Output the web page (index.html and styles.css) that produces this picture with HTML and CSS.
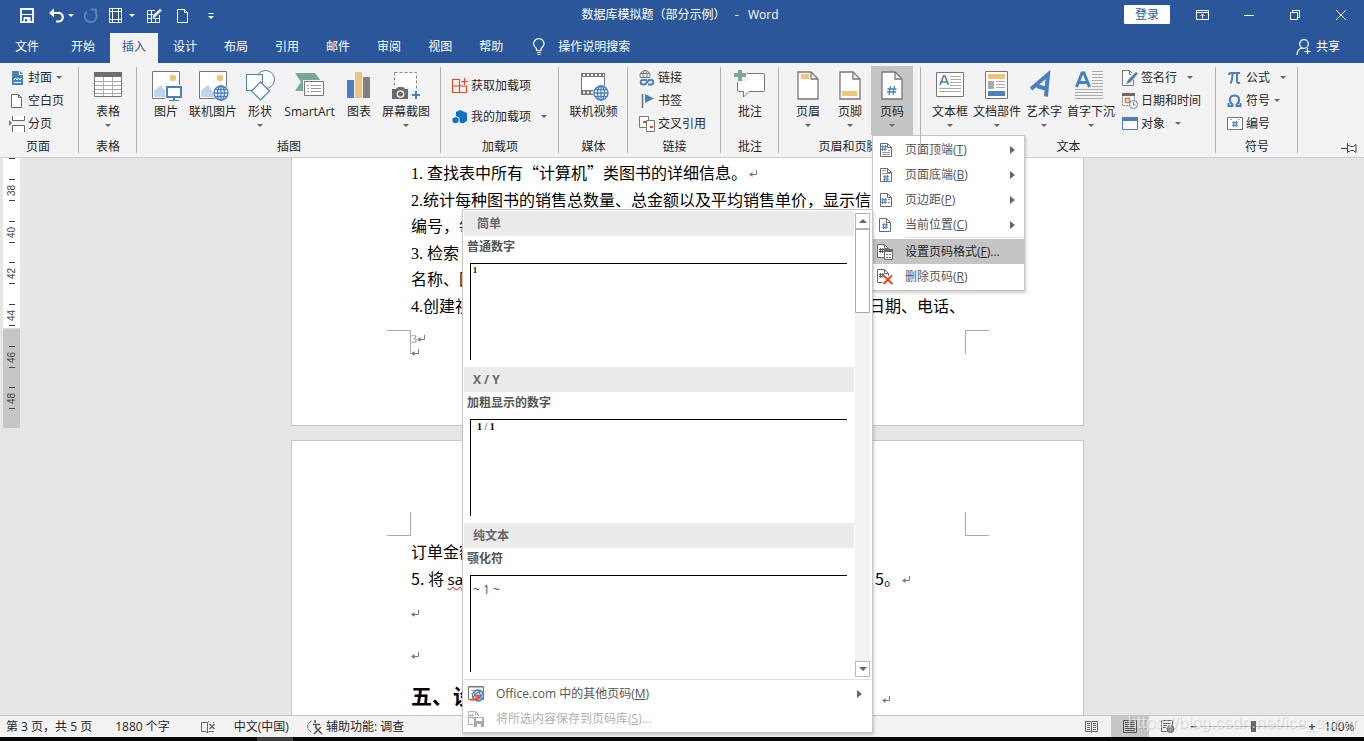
FILE: index.html
```html
<!DOCTYPE html>
<html lang="zh-CN">
<head>
<meta charset="utf-8">
<title>数据库模拟题（部分示例） - Word</title>
<link rel="stylesheet" href="styles.css">
</head>
<body>
<svg class="defs" aria-hidden="true">
  <symbol id="ret" viewBox="0 0 9 8"><path d="M7.500 0v4.500H2" fill="none" stroke="#777"/><path d="M0 4.500l3.500-2.500v5z" fill="#777"/></symbol>
  <symbol id="globe" viewBox="0 0 16 16"><circle cx="8" cy="8" r="8" fill="#f3f3f3"/><g fill="#fff" stroke="#4a80bb" stroke-width="1.300"><circle cx="8" cy="8" r="7"/><ellipse cx="8" cy="8" rx="3.500" ry="7"/><path d="M8 1v14M1 8h14M2 4.500h12M2 11.500h12"/></g></symbol>
  <symbol id="page" viewBox="0 0 22 29"><path d="M1 1h13l7 7v20H1z" fill="#fff" stroke="#777" stroke-width="1.300"/><path d="M14 1v7h7" fill="none" stroke="#777" stroke-width="1.300"/></symbol>
  <symbol id="mini" viewBox="0 0 12 14"><path d="M.5.5h7l4 4v9H.5z" fill="#fff" stroke="#6a6a6a"/><path d="M7.500.5v4h4" fill="none" stroke="#6a6a6a"/></symbol>
  <symbol id="hash" viewBox="0 0 6 6"><path d="M2 0L1.500 6M4.500 0L4 6M0 1.700h6M0 4.200h6" fill="none" stroke="currentColor" stroke-width="1.100"/></symbol>
</svg>

<header class="top">
  <div class="titlebar">
    <div class="quick">
      <button class="qa" aria-label="保存"><svg width="16" height="16" viewBox="0 0 16 16"><path d="M1 1h12v13H1z" fill="none" stroke="#fff" stroke-width="1.800"/><path d="M2 6.500h10M4 9.500h6V14H4z" fill="#fff" stroke="#fff"/><path d="M5 11h2v2.500H5z" fill="#2b579a"/></svg></button>
      <button class="qa undo" aria-label="撤消"><svg width="16" height="16" viewBox="0 0 16 16"><path d="M3 5h7a4 4 0 0 1 1 8.500H8" fill="none" stroke="#fff" stroke-width="2.200"/><path d="M1 5l5-4.500v9z" fill="#fff"/></svg><i class="caret"></i></button>
      <button class="qa redo" aria-label="恢复"><svg width="16" height="16" viewBox="0 0 16 16"><path d="M4 3.500A6 6 0 1 0 12 4M8 1.500h5v5" fill="none" stroke="#6485b8" stroke-width="1.800"/></svg></button>
      <button class="qa" aria-label="页边距"><svg width="16" height="16" viewBox="0 0 16 16"><path d="M.5.5h12v14H.5zM3.500 0v15M9.500 0v15M0 3.500h13M0 11.500h13" fill="none" stroke="#fff"/></svg><i class="caret"></i></button>
      <button class="qa" aria-label="绘制表格"><svg width="16" height="16" viewBox="0 0 16 16"><path d="M8 2.500H.5v12h12V7M0 6.500h7M4.500 2v12M8.500 10v5M0 10.500h13" fill="none" stroke="#fff"/><path d="M5 11l1-4 7-6.500 2 2-7 7z" fill="#fff" stroke="#2b579a" stroke-width=".6"/></svg></button>
      <button class="qa" aria-label="新建"><svg width="16" height="16" viewBox="0 0 16 16"><path d="M2.500 1.500h7l3 3v10h-10zM9.500 1.500v3h3" fill="none" stroke="#fff"/></svg></button>
      <button class="qa" aria-label="自定义"><svg width="16" height="16" viewBox="0 0 16 16"><path d="M5.500 5.500h5" stroke="#fff"/><path d="M5 8h6l-3 3z" fill="#fff"/></svg></button>
    </div>
    <h1 class="title">数据库模拟题（部分示例） &nbsp; - &nbsp;&nbsp;Word</h1>
    <div class="window">
      <button class="login">登录</button>
      <button class="win" aria-label="功能区显示选项"><svg width="14" height="14" viewBox="0 0 14 14"><path d="M.5 2.500h12v9H.5zM0 4.500h13M6.500 10.500v-4M4.500 8l2-2 2 2" fill="none" stroke="#fff"/></svg></button>
      <button class="win" aria-label="最小化"><svg width="12" height="12" viewBox="0 0 12 12"><path d="M1 6.500h10" stroke="#fff"/></svg></button>
      <button class="win" aria-label="还原"><svg width="12" height="12" viewBox="0 0 12 12"><path d="M1.500 3.500h7v7h-7zM3.500 3V1.500h7v7H9" fill="none" stroke="#fff"/></svg></button>
      <button class="win" aria-label="关闭"><svg width="12" height="12" viewBox="0 0 12 12"><path d="M1 1l10 10M11 1L1 11" stroke="#fff"/></svg></button>
    </div>
  </div>
  <nav class="tabs">
    <button class="tab file">文件</button>
    <button class="tab">开始</button>
    <button class="tab active">插入</button>
    <button class="tab">设计</button>
    <button class="tab">布局</button>
    <button class="tab">引用</button>
    <button class="tab">邮件</button>
    <button class="tab">审阅</button>
    <button class="tab">视图</button>
    <button class="tab">帮助</button>
    <button class="tell"><svg width="14" height="18" viewBox="0 0 14 18"><path d="M4.500 12.500v-2C2 8.500 1.500 7 1.500 6a5.300 5.300 0 0 1 10.600 0c0 1-.6 2.500-3 4.500v2zM5 14.500h4M5.500 16.500h3" fill="none" stroke="#fff" stroke-width="1.200"/></svg>操作说明搜索</button>
    <button class="share"><svg width="16" height="16" viewBox="0 0 16 16"><circle cx="8" cy="5" r="4.300" fill="none" stroke="#fff" stroke-width="1.200"/><path d="M1 16c0-4 2.500-6.500 5.500-7M11.500 9v6M8.500 12.500h6" fill="none" stroke="#fff" stroke-width="1.200"/></svg>共享</button>
  </nav>
</header>

<section class="ribbon">
  <div class="group g-pages">
    <div class="body"><div class="stack">
      <button class="small"><svg width="16" height="16" viewBox="0 0 16 16"><path d="M3 1h7v4h4v10H3z" fill="#4a80bb"/><path d="M11 1l3 3h-3z" fill="#4a80bb"/><path d="M5 10l1.500-2L8 10l1.500-2 1.500 2 1.500-2M5 12.500h7" fill="none" stroke="#fff"/></svg>封面<i class="caret"></i></button>
      <button class="small"><svg width="16" height="16" viewBox="0 0 16 16"><path d="M2.500 1.500h7l3 3v10h-10zM9.500 1.500v3h3" fill="#fff" stroke="#6a6a6a"/></svg>空白页</button>
      <button class="small"><svg width="16" height="16" viewBox="0 0 16 16"><path d="M3.500 0v4.500h12V0M3.500 16V9.500h12V16" fill="#fff" stroke="#6a6a6a"/><path d="M0 4l3 3-3 3z" fill="#4a80bb"/></svg>分页</button>
    </div></div>
    <div class="label">页面</div>
  </div>
  <div class="group g-table">
    <div class="body"><button class="big"><svg width="32" height="32" viewBox="0 0 32 32"><path d="M2.500 2.500h27v24h-27z" fill="#fff" stroke="#777"/><path d="M2 2h28v5H2z" fill="#6e6e6e"/><path d="M3 11.500h26M3 15.500h26M3 19.500h26M3 23.500h26M11.500 7v19M20.500 7v19" stroke="#aaa"/></svg>表格<i class="caret"></i></button></div>
    <div class="label">表格</div>
  </div>
  <div class="group g-illus">
    <div class="body">
      <button class="big"><svg width="32" height="32" viewBox="0 0 32 32"><path d="M2.500 1.500h27v27h-27z" fill="#fff" stroke="#777"/><circle cx="23" cy="8" r="3.200" fill="#edc57b"/><path d="M4 27v-6l7-6 9 12z" fill="#bfd3e9"/><path d="M15 15h18v14H15z" fill="#f3f3f3"/><path d="M17 17h14v10H17z" fill="#fff" stroke="#4a80bb" stroke-width="2"/><path d="M23 28h2v2h4v1H19v-1h4z" fill="#4a80bb"/></svg>图片</button>
      <button class="big"><svg width="32" height="32" viewBox="0 0 32 32"><path d="M2.500 1.500h27v27h-27z" fill="#fff" stroke="#777"/><circle cx="23" cy="8" r="3.200" fill="#edc57b"/><path d="M4 27v-6l7-6 9 12z" fill="#bfd3e9"/><use href="#globe" x="16" y="15" width="16" height="16"/></svg>联机图片</button>
      <button class="big"><svg width="32" height="32" viewBox="0 0 32 32"><g fill="#fff" stroke="#4a80bb"><circle cx="21.500" cy="9.500" r="9"/><path d="M2.500 4.500h16v16h-16z"/><path d="M16.500 12l9 9-9 9-9-9z" stroke-width="1.200"/></g></svg>形状<i class="caret"></i></button>
      <button class="big smart"><svg width="32" height="32" viewBox="0 0 32 32"><path d="M1 3h20l6 8H11v10H1l6-9z" fill="#7aa898"/><path d="M9 10h22v17H9z" fill="#f3f3f3"/><path d="M10.500 11.500h19v14h-19z" fill="#fff" stroke="#777"/><path d="M13 15.500h2M17 15.500h10M13 18.500h2M17 18.500h10M13 21.500h2M17 21.500h10" stroke="#999"/></svg>SmartArt</button>
      <button class="big"><svg width="32" height="32" viewBox="0 0 32 32"><path d="M4 10h7v18H4z" fill="#4a80bb"/><path d="M12 2h7v26h-7z" fill="#edc57b"/><path d="M20 7h7v21h-7z" fill="#808080"/></svg>图表</button>
      <button class="big"><svg width="32" height="32" viewBox="0 0 32 32"><path d="M4.500 2.500h22v22h-22z" fill="#fff" stroke="#888" stroke-dasharray="3 2"/><path d="M1 17h19v14H1z" fill="#f3f3f3"/><path d="M2 19h4l2-2h5l2 2h3v10H2z" fill="#6a6a6a"/><circle cx="10.500" cy="24" r="3.200" fill="#6a6a6a" stroke="#fff" stroke-width="1.300"/><path d="M22 20h10v11H22z" fill="#f3f3f3"/><path d="M25 21h2v3h3v2h-3v3h-2v-3h-3v-2h3z" fill="#4a80bb"/></svg>屏幕截图<i class="caret"></i></button>
    </div>
    <div class="label">插图</div>
  </div>
  <div class="group g-addins">
    <div class="body"><div class="stack roomy">
      <button class="small"><svg width="16" height="16" viewBox="0 0 16 16"><path d="M.5 1.500h7v13h-7zM.5 8h14v6.500H.5M12.500 0v7M9 3.500h7" fill="none" stroke="#dc4a1e" stroke-width="1.200"/></svg>获取加载项</button>
      <button class="small wide"><svg width="16" height="16" viewBox="0 0 16 16"><path d="M8 1l7 3v8l-4 2.500L4 12V3z" fill="#0e72c5"/><path d="M0 9l4-1.500L7 9v4l-3 2-4-1.500z" fill="#0e72c5" stroke="#f3f3f3"/></svg>我的加载项<i class="caret"></i></button>
    </div></div>
    <div class="label">加载项</div>
  </div>
  <div class="group g-media">
    <div class="body"><button class="big"><svg width="32" height="32" viewBox="0 0 32 32"><path d="M4 3h24v22H4z" fill="#777"/><path d="M5 7h22v13H5z" fill="#fff"/><path d="M6 5h21M6 22.500h12" stroke="#fff" stroke-width="2" stroke-dasharray="2 2"/><use href="#globe" x="16" y="15" width="16" height="16"/></svg>联机视频</button></div>
    <div class="label">媒体</div>
  </div>
  <div class="group g-links">
    <div class="body"><div class="stack">
      <button class="small"><svg width="16" height="16" viewBox="0 0 16 16"><g fill="none" stroke="#777"><circle cx="6" cy="5.500" r="5"/><ellipse cx="6" cy="5.500" rx="2" ry="5"/><path d="M1 3.500h10M1 7.500h10"/></g><path d="M0 8h16v8H0z" fill="#f3f3f3"/><path d="M8 10H4a2 2 0 0 0 0 4.500h2l4-4.500h2a2 2 0 0 1 0 4.500H9" fill="none" stroke="#4a80bb" stroke-width="2"/></svg>链接</button>
      <button class="small"><svg width="16" height="16" viewBox="0 0 16 16"><path d="M3.500 1v14" stroke="#6a6a6a" stroke-width="1.500"/><path d="M6 1l9 4.500L6 10z" fill="#4a80bb"/></svg>书签</button>
      <button class="small"><svg width="16" height="16" viewBox="0 0 16 16"><path d="M.5.5h9v11h-9z" fill="#fff" stroke="#777"/><path d="M7.500 4.500h8v11h-8z" fill="#fff" stroke="#777"/><path d="M4 5h4v2H4zM11 10h3v2h-3z" fill="#dc4a1e"/></svg>交叉引用</button>
    </div></div>
    <div class="label">链接</div>
  </div>
  <div class="group g-comment">
    <div class="body"><button class="big"><svg width="32" height="32" viewBox="0 0 32 32"><path d="M5 3.500h24a1.500 1.500 0 0 1 1.500 1.500v15a1.500 1.500 0 0 1-1.500 1.500H15l-5.500 5.500v-5.500H5A1.500 1.500 0 0 1 3.500 20V5z" fill="#fff" stroke="#777"/><path d="M0 0h13v12H0z" fill="#f3f3f3"/><path d="M4-1h4v4h4v4H8v4H4V7H0V3h4z" fill="#7aa898"/></svg>批注</button></div>
    <div class="label">批注</div>
  </div>
  <div class="group g-header">
    <div class="body">
      <button class="big fixed"><svg width="32" height="32" viewBox="0 0 32 32"><use href="#page" x="5" width="22" height="29" y="1"/><path d="M9 4h8v5H9z" fill="#edc57b"/></svg>页眉<i class="caret"></i></button>
      <button class="big fixed"><svg width="32" height="32" viewBox="0 0 32 32"><use href="#page" x="5" width="22" height="29" y="1"/><path d="M8 21h15v5H8z" fill="#edc57b"/></svg>页脚<i class="caret"></i></button>
      <div class="drop">
        <button class="big fixed open" aria-expanded="true"><svg width="32" height="32" viewBox="0 0 32 32"><use href="#page" x="5" width="22" height="29" y="1"/><path d="M14.500 16l-1.500 9M18.500 16l-1.500 9M11.500 19h9M11 22h9" stroke="#4a80bb" stroke-width="1.300"/></svg>页码<i class="caret"></i></button>
        <div class="menu">
          <button class="item"><svg width="20" height="16" viewBox="0 0 20 16"><use href="#mini" x="3" y="1" width="12" height="14"/><g color="#4a80bb"><use href="#hash" x="4" y="3" width="6" height="6"/></g><path d="M5 10.500h8M5 12.500h8M11 8.500h2" stroke="#999"/></svg><span>页面顶端(<u>T</u>)</span><i class="more"></i></button>
          <button class="item"><svg width="20" height="16" viewBox="0 0 20 16"><use href="#mini" x="3" y="1" width="12" height="14"/><g color="#4a80bb"><use href="#hash" x="6" y="8" width="6" height="6"/></g><path d="M5 3.500h4M5 6.500h8" stroke="#999"/></svg><span>页面底端(<u>B</u>)</span><i class="more"></i></button>
          <button class="item"><svg width="20" height="16" viewBox="0 0 20 16"><use href="#mini" x="3" y="1" width="12" height="14"/><g color="#4a80bb"><use href="#hash" x="4" y="6" width="6" height="6"/></g><path d="M11 7.500h2M11 10.500h2" stroke="#888"/></svg><span>页边距(<u>P</u>)</span><i class="more"></i></button>
          <button class="item"><svg width="20" height="16" viewBox="0 0 20 16"><use href="#mini" x="2" y="1" width="12" height="14"/><g color="#4a80bb"><use href="#hash" x="5" y="6" width="6" height="6"/></g></svg><span>当前位置(<u>C</u>)</span><i class="more"></i></button>
          <hr class="rule">
          <button class="item hot"><svg width="20" height="16" viewBox="0 0 20 16"><use href="#mini" x="0" y="0" width="12" height="14"/><g color="#555"><use href="#hash" x="2" y="4" width="5" height="5"/></g><path d="M7.500 5.500h8v10h-8z" fill="#fff" stroke="#6a6a6a"/><path d="M7 5h9v3H7z" fill="#6a6a6a"/><path d="M9 10.500h2M12 10.500h2M9 13.500h2M12 13.500h2" stroke="#777"/></svg><span>设置页码格式(<u>F</u>)...</span></button>
          <button class="item"><svg width="20" height="16" viewBox="0 0 20 16"><use href="#mini" x="0" y="0" width="12" height="14"/><g color="#555"><use href="#hash" x="2" y="4" width="5" height="5"/></g><path d="M6.500 6.500l9 8.500M15 6.500L6.500 15" stroke="#fff" stroke-width="4"/><path d="M6.500 6.500l9 8.500M15 6.500L6.500 15" stroke="#dc4a1e" stroke-width="2"/></svg><span>删除页码(<u>R</u>)</span></button>

          <div class="gallery">
            <div class="scroller">
              <div class="entries">
                <h2 class="strip first">简单</h2>
                <button class="entry">普通数字<span class="preview tiny"><b>1</b></span></button>
                <h2 class="strip">X / Y</h2>
                <button class="entry">加粗显示的数字<span class="preview bold"><b>1</b> / <b>1</b></span></button>
                <h2 class="strip">纯文本</h2>
                <button class="entry">颚化符<span class="preview plain">~ 1 ~</span></button>
              </div>
              <div class="scrollbar"><button class="arrow" aria-label="向上滚动"><i class="up"></i></button><div class="thumb"></div><button class="arrow end" aria-label="向下滚动"><i class="down"></i></button></div>
            </div>
            <div class="foot">
              <button class="item"><svg width="20" height="16" viewBox="0 0 20 16"><path d="M.5.5h15v13H.5z" fill="#fff" stroke="#777"/><path d="M1 1h14" stroke="#777"/><path d="M3 4.500h4M3 7.500h2" stroke="#aaa"/><g fill="#fff" stroke="#4a80bb" stroke-width="1.300"><circle cx="10" cy="9.500" r="5.500"/><ellipse cx="10" cy="9.500" rx="5.500" ry="2.500" transform="rotate(-40 10 9.500)"/><ellipse cx="10" cy="9.500" rx="2.500" ry="5.500" transform="rotate(-20 10 9.500)" fill="none"/></g><path d="M2 13.500c5 1 7 0 8.500-3M7 9.500h4v4" fill="none" stroke="#ef5a30" stroke-width="2"/></svg><span>Office.com 中的其他页码(<u>M</u>)</span><i class="more"></i></button>
              <button class="item" disabled><svg width="20" height="16" viewBox="0 0 20 16"><path d="M.5.5h7l3 3V5M.5.5v13h5M7.500.5v3h3" fill="none" stroke="#b4b4b4"/><g color="#b4b4b4"><use href="#hash" x="1" y="3" width="5" height="5"/></g><path d="M6 6h9l1 1v9H6z" fill="#aaa"/><path d="M8 7h6v3H8zM9 13h4v3H9z" fill="#fff"/></svg><span>将所选内容保存到页码库(<u>S</u>)...</span></button>
            </div>
          </div>
        </div>
      </div>
    </div>
    <div class="label">页眉和页脚</div>
  </div>
  <div class="group g-text">
    <div class="body">
      <button class="big text"><svg width="32" height="32" viewBox="0 0 32 32"><path d="M2.500 2.500h27v24h-27z" fill="#fff" stroke="#777"/><path d="M6 15L9.500 6h1.500L14.500 15M7.500 12h5.500" fill="none" stroke="#4a80bb" stroke-width="1.600"/><path d="M16 6.500h11M16 9.500h11M16 12.500h11M16 15.500h11M5 18.500h22M5 21.500h22" stroke="#aaa"/></svg>文本框<i class="caret"></i></button>
      <button class="big"><svg width="32" height="32" viewBox="0 0 32 32"><path d="M4.500 1.500h22v27h-22z" fill="#fff" stroke="#777"/><path d="M7 4h17v5H7z" fill="#edc57b"/><path d="M7 11h6v8H7z" fill="#aaa"/><path d="M15 11.500h9M15 14.500h9M15 17.500h9" stroke="#aaa"/><path d="M7 21h17v5H7z" fill="#4a80bb"/></svg>文档部件<i class="caret"></i></button>
      <button class="big text"><svg width="32" height="32" viewBox="0 0 32 32"><path d="M3 19L20 4.500l-2 22M9 16l10 3" fill="none" stroke="#4a80bb" stroke-width="4"/></svg>艺术字<i class="caret"></i></button>
      <button class="big"><svg width="32" height="32" viewBox="0 0 32 32"><path d="M1.500 17L7 3h2l5.500 14M3.500 12.500h9" fill="none" stroke="#4a80bb" stroke-width="3"/><path d="M17 1.500h11M17 4.500h11M17 7.500h11M17 10.500h11M17 13.500h11M17 16.500h11M0 19.500h28M0 22.500h28M0 25.500h28M0 28.500h28" stroke="#aaa"/></svg>首字下沉<i class="caret"></i></button>
      <div class="stack">
        <button class="small wide"><svg width="16" height="16" viewBox="0 0 16 16"><path d="M.5.5h7l4 4v11H.5z" fill="#fff" stroke="#777"/><path d="M7.500.5v4h4" fill="none" stroke="#777"/><path d="M5 13l9-10" stroke="#f3f3f3" stroke-width="5"/><path d="M4 14l2-4 8-8 2 1.500-8 9z" fill="#4a80bb"/></svg>签名行<i class="caret"></i></button>
        <button class="small"><svg width="16" height="16" viewBox="0 0 16 16"><path d="M.5.5h12v12H.5z" fill="#fff" stroke="#777" stroke-dasharray="2 1"/><path d="M0 0h13v3H0z" fill="#6a6a6a"/><path d="M3.500 5.500h4v4h-4z" fill="#fff" stroke="#e67a28" stroke-width="1.500"/><circle cx="11.500" cy="11.500" r="4" fill="#fff" stroke="#4a80bb"/><path d="M11.500 9v3h2" fill="none" stroke="#4a80bb"/></svg>日期和时间</button>
        <button class="small wide"><svg width="16" height="16" viewBox="0 0 16 16"><path d="M.5 1.500h15v12H.5z" fill="#fff" stroke="#4a80bb"/><path d="M0 1h16v4H0z" fill="#4a80bb"/></svg>对象<i class="caret"></i></button>
      </div>
    </div>
    <div class="label">文本</div>
  </div>
  <div class="group g-symbols">
    <div class="body"><div class="stack">
      <button class="small wide"><svg width="16" height="16" viewBox="0 0 16 16"><path d="M2 5c0-2 1-2 2-2h9M5.500 3c0 5-.5 8-2 10.500M10 3v8c0 2 1 2.500 3 1.500" fill="none" stroke="#4a80bb" stroke-width="2"/></svg>公式<i class="caret"></i></button>
      <button class="small"><svg width="16" height="16" viewBox="0 0 16 16"><path d="M1.500 10v3h4v-1.500C1 8 2.500 2.500 7.500 2.500S14 8 9.500 11.500V13h4v-3" fill="none" stroke="#4a80bb" stroke-width="2"/></svg>符号<i class="caret"></i></button>
      <button class="small"><svg width="16" height="16" viewBox="0 0 16 16"><path d="M.5 1.500h15v12H.5z" fill="#fff" stroke="#777"/><path d="M3 3.500h2M11 3.500h2" stroke="#aaa"/><g color="#4a80bb"><use href="#hash" x="5" y="5" width="6" height="6"/></g></svg>编号</button>
    </div></div>
    <div class="label">符号</div>
  </div>
  <button class="pin" aria-label="固定功能区"><svg width="16" height="12" viewBox="0 0 16 12"><path d="M0 6.500h6M6.500 1v10M6.500 3.500h2l1 1h3l2.500-2v8l-2.500-2h-3l-1 1h-2" fill="none" stroke="#444"/></svg></button>
</section>

<main class="workspace">
  <div class="ruler">
    <div class="seg light"><span class="mark">38</span><span class="mark">40</span><span class="mark">42</span><span class="mark">44</span></div>
    <div class="seg dark"><span class="mark">46</span><span class="mark">48</span></div>
  </div>
  <div class="pages">
    <article class="sheet upper">
      <p><span class="n">1. </span>查找表中所有“计算机”类图书的详细信息。<svg class="ret"><use href="#ret"/></svg></p>
      <p><span class="n">2.</span>统计每种图书的销售总数量、总金额以及平均销售单价，显示信息<br>编号，每</p>
      <p><span class="n">3. </span>检索<br>名称、图</p>
      <p class="split"><span><span class="n">4.</span>创建视</span><span>日期、电话、</span></p>
      <div class="margins bottom"><i class="corner tr"></i><div class="pageno">3<svg class="ret"><use href="#ret"/></svg><br><svg class="ret"><use href="#ret"/></svg></div><i class="corner tl"></i></div>
    </article>
    <article class="sheet lower">
      <div class="margins"><i class="corner br"></i><i class="corner bl"></i></div>
      <p>订单金额</p>
      <p class="split inset"><span>5. 将 <span class="typo">sale</span></span><span>5。<svg class="ret"><use href="#ret"/></svg></span></p>
      <p class="blank"><svg class="ret"><use href="#ret"/></svg></p>
      <p class="blank"><svg class="ret"><use href="#ret"/></svg></p>
      <h2 class="split chapter"><span>五、设</span><svg class="ret"><use href="#ret"/></svg></h2>
    </article>
  </div>
</main>

<footer class="status">
  <span class="pages-count">第 3 页，共 5 页</span>
  <span class="words">1880 个字</span>
  <svg class="proof" width="16" height="14" viewBox="0 0 16 14"><path d="M7 2.500H1.500v9H6l1.500 1.500V2.500L9 1.500M7.500 13L9 11.500h5M13.500 2v1" fill="none" stroke="#666"/><path d="M9.500 4l5 5M14.500 4l-5 5" stroke="#666" stroke-width="1.500"/></svg>
  <span class="lang">中文(中国)</span>
  <span class="access"><svg width="16" height="16" viewBox="0 0 16 16"><path d="M4.500 2A6 6 0 0 0 4 13" fill="none" stroke="#555" stroke-dasharray="4 1"/><path d="M8 1v3M6 5.500h7M9 5v4M8 8l7 7M14 8l-7 7" fill="none" stroke="#555" stroke-width="1.500"/></svg>辅助功能: 调查</span>
  <div class="views">
    <button class="view" aria-label="阅读视图"><svg width="14" height="14" viewBox="0 0 14 14"><path d="M.5 1.500H6L6.500 2l.5-.5h5.500v10H7.500l-1 1-1-1h-5zM6.500 2v10M2 3.500h3M2 5.500h3M2 7.500h3M2 9.500h3M8 3.500h3M8 5.500h3M8 7.500h3M8 9.500h3" fill="none" stroke="#666"/></svg></button>
    <button class="view on" aria-label="页面视图"><svg width="14" height="14" viewBox="0 0 14 14"><path d="M.5.5h13v12H.5zM2 2.500h10M2 4.500h10M2 6.500h10M2 8.500h10M2 10.500h10" fill="none" stroke="#555"/></svg></button>
    <button class="view" aria-label="Web 版式视图"><svg width="14" height="14" viewBox="0 0 14 14"><path d="M6 11.500H.5V.5h11V5M2 3.500h8M2 5.500h4M2 7.500h3" fill="none" stroke="#666"/><circle cx="9.500" cy="9" r="3.500" fill="#999" stroke="#666"/></svg></button>
    <button class="step" aria-label="缩小">−</button>
    <input class="zoom" type="range" min="10" max="190" value="100" aria-label="缩放">
    <button class="step" aria-label="放大">+</button>
    <span class="percent">100%</span>
  </div>
  <span class="watermark">https://blog.csdn.net/ice_super</span>
</footer>
<div class="edge"><i></i></div>
</body>
</html>
```
FILE: styles.css
```css
* { box-sizing: border-box; }
body {
  margin: 0;
  height: 100vh;
  display: flex;
  flex-direction: column;
  overflow: hidden;
  background: #e6e6e6;
  color: #262626;
  font: 12px/16px "Open Sans", "Noto Sans CJK SC", sans-serif;
}
button {
  border: 0;
  padding: 0;
  background: none;
  color: inherit;
  font: inherit;
  white-space: nowrap;
}
svg { flex: none; }
.defs { position: absolute; width: 0; height: 0; }
.caret {
  flex: none;
  border: 3px solid transparent;
  border-top-color: #666;
  border-bottom: 0;
}

/* title bar and tabs */
.top { background: #2b579a; color: #fff; }
.titlebar {
  display: grid;
  grid-template-columns: 1fr auto 1fr;
  height: 33px;
  padding-bottom: 4px;
  align-items: center;
}
.quick { display: flex; align-items: center; gap: 12px; padding: 2px 0 0 20px; }
.qa { display: flex; align-items: center; gap: 4px; }
.qa .caret { border-top-color: #fff; }
.qa.undo { margin-right: -3px; }
.qa.redo { margin-right: -2px; }
.title { margin: 0; padding-right: 4px; font-size: 12px; font-weight: 400; }
.window { display: flex; justify-content: flex-end; align-items: center; }
.login {
  width: 46px;
  height: 19px;
  margin-right: 10px;
  border-radius: 1px;
  background: #fff;
  color: #2b579a;
}
.win { width: 46px; height: 28px; display: flex; align-items: center; justify-content: center; }
.tabs { display: flex; height: 30px; gap: 3px; padding-left: 3px; }
.tab { padding: 0 12px 3px; }
.tab.file { margin-right: 5px; }
.tab.active { background: #f3f3f3; color: #2b579a; }
.tell, .share { display: flex; align-items: center; gap: 12px; padding-bottom: 3px; }
.tell { margin-left: 14px; }
.share { margin-left: auto; margin-right: 24px; gap: 4px; }

/* ribbon */
.ribbon {
  display: flex;
  padding-top: 3px;
  height: 95px;
  border-bottom: 1px solid #d0d0d0;
  background: #f3f3f3;
  position: relative;
  z-index: 2;
}
.group { flex: none; position: relative; }
.group::after {
  content: "";
  position: absolute;
  right: 0;
  top: 1px;
  height: 86px;
  border-right: 1px solid #b4b4b4;
}
.body { display: flex; height: 71px; }
.label { text-align: center; line-height: 20px; }
.stack { display: flex; flex-direction: column; }
.small { display: flex; align-items: center; gap: 3px; height: 23px; }
.small .caret { margin-left: 1px; }
.small.wide .caret { margin-left: 7px; }
.roomy { padding-top: 4px; }
.roomy .small { height: 31px; }
.big {
  display: flex;
  flex-direction: column;
  align-items: center;
  height: 69px;
  padding-top: 4px;
  line-height: 20px;
}
.big .caret { margin-top: 2px; }
.fixed { width: 42px; }
.text { width: 36px; }
.smart { width: 53px; }
.open { background: #c5c5c5; }
.g-pages { width: 79px; }
.g-pages .body { padding-left: 9px; }
.g-pages .label { padding-right: 3px; }
.g-table { width: 58px; }
.g-media { width: 69px; }
.g-comment { width: 58px; }
.g-table .body, .g-media .body, .g-comment .body { justify-content: center; }
.g-illus { width: 304px; }
.g-illus .body { padding-left: 13px; gap: 7px; }
.g-addins { width: 118px; }
.g-addins .body { padding-left: 11px; }
.g-links { width: 93px; }
.g-links .body { padding-left: 11px; }
.g-header { width: 142px; }
.g-header .body { padding-left: 8px; }
.g-header .label { padding-right: 3px; }
.g-text { width: 295px; }
.g-text .body { padding-left: 11px; gap: 5px; }
.g-text .stack { padding-left: 2px; }
.g-symbols { width: 82px; }
.g-symbols .body { padding-left: 11px; }
.pin { margin: auto 7px 3px auto; height: 12px; display: flex; }
.drop { position: relative; }

/* page number menu */
.menu {
  position: absolute;
  top: 69px;
  left: 1px;
  width: 153px;
  padding: 1px 0;
  border: 1px solid #c6c6c6;
  background: #fff;
  color: #555;
  box-shadow: 1px 2px 3px rgba(0, 0, 0, .2);
}
.item {
  display: flex;
  align-items: center;
  gap: 8px;
  width: 100%;
  height: 25px;
  padding-left: 4px;
}
.item:disabled { color: #b0b0b0; }
.item.hot { background: #c5c5c5; color: #262626; }
.more {
  margin: 0 9px 0 auto;
  border: 4px solid transparent;
  border-left: 5px solid #666;
  border-right: 0;
}
.rule { height: 2px; margin: 0 1px 0 32px; border: 0; border-top: 1px solid #e0e0e0; }

/* gallery */
.gallery {
  position: absolute;
  top: 73px;
  right: 151px;
  width: 411px;
  border: 1px solid #c6c6c6;
  background: #fff;
  padding: 1px;
  box-shadow: 1px 2px 3px rgba(0, 0, 0, .2);
}
.scroller { display: flex; border-bottom: 1px solid #e0e0e0; }
.entries { flex: 1; }
.strip {
  margin: 0;
  padding-left: 9px;
  background: #ebebeb;
  color: #666;
  font-size: 12px;
  line-height: 25px;
}
.strip.first { padding-left: 13px; }
.entry {
  display: block;
  width: 100%;
  padding: 0 7px 7px 3px;
  text-align: left;
  font-weight: 700;
  line-height: 22px;
}
.preview {
  display: block;
  height: 97px;
  margin: 5px 0 0 3px;
  padding: 2px;
  border: solid #000;
  border-width: 1px 0 0 1px;
  color: #000;
  font: 8px/10px "Liberation Serif", serif;
}
.preview.bold { padding-left: 6px; font-size: 10px; }
.preview.plain { padding-top: 4px; color: #555; font: 12px/20px "Open Sans", sans-serif; }
.scrollbar { width: 17px; padding: 2px 1px; display: flex; flex-direction: column; background: #f3f3f3; background-clip: content-box; }
.arrow { height: 16px; display: flex; align-items: center; justify-content: center; border: 1px solid #b8b8b8; background: #fff; }
.arrow.end { margin-top: auto; }
.up, .down { border: 4px solid transparent; }
.up { border-bottom-color: #666; border-top: 0; }
.down { border-top-color: #666; border-bottom: 0; }
.thumb { height: 84px; border: 1px solid #ababab; background: #fff; }
.foot { padding-top: 1px; }

/* document */
.workspace { flex: 1; min-height: 0; display: flex; overflow: hidden; }
.ruler { width: 17px; margin-left: 3px; }
.seg {
  display: flex;
  flex-direction: column;
  align-items: center;
  justify-content: space-between;
}
.light { height: 170px; padding: 21px 0 2px; background: linear-gradient(#444, #444) center top / 6px 1px no-repeat #fff; }
.dark { height: 100px; padding: 17px 0 19px; background: #c6c6c6; border-top: 1px solid #ddd; }
.mark {
  width: 16px;
  height: 22px;
  writing-mode: vertical-rl;
  transform: rotate(180deg);
  font: 10px/16px "Liberation Sans", sans-serif;
  text-align: center;
  color: #444;
  background: linear-gradient(#444, #444) center top / 6px 1px no-repeat, linear-gradient(#444, #444) center bottom / 6px 1px no-repeat;
}
.pages { flex: 1; display: flex; flex-direction: column; align-items: center; gap: 14px; padding-right: 9px; }
.sheet {
  flex: none;
  width: 793px;
  padding: 1px 118px 65px 119px;
  border: 1px solid #c6c6c6;
  background: #fff;
  color: #000;
  font: 16px/26px "Noto Sans CJK SC", sans-serif;
}
.sheet p { margin: 0 0 1px; white-space: nowrap; }
.upper { border-top: 0; }
.lower { padding-top: 71px; }
.n { font-family: "Liberation Serif", serif; line-height: 0; white-space: pre; }
.ret { width: 9px; height: 8px; margin-left: 2px; vertical-align: 1px; }
.split { display: flex; justify-content: space-between; }
.inset { padding-right: 54px; }
.sheet .blank { margin: 0; line-height: 42px; }
.blank .ret { margin: 0; vertical-align: 2px; }
.chapter { margin: 0; padding-right: 74px; font-size: 21px; line-height: 38px; align-items: baseline; }
.typo { font-family: "Noto Sans", sans-serif; font-size: 15px; line-height: 0; text-decoration: underline wavy #e00 1px; text-underline-offset: 1px; }
.margins { display: flex; justify-content: space-between; margin: 0 -24px 2px; }
.margins.bottom { margin: 12px -24px 0; }
.corner { width: 24px; height: 24px; border: 0 solid #aaa; }
.tr { border-width: 1px 1px 0 0; }
.tl { border-width: 1px 0 0 1px; }
.br { border-width: 0 1px 1px 0; }
.bl { border-width: 0 0 1px 1px; }
.pageno { flex: 1; padding-top: 2px; color: #888; font: 12px/14px "Liberation Serif", serif; }
.pageno .ret { margin-left: 0; vertical-align: 0; }

/* status bar */
.status {
  display: flex;
  align-items: center;
  height: 22px;
  border-top: 1px solid #c6c6c6;
  background: #f3f3f3;
  padding-left: 6px;
  position: relative;
  white-space: nowrap;
}
.words { margin-left: 23px; }
.proof { margin-left: 30px; }
.lang { margin-left: 18px; }
.access { display: flex; align-items: center; gap: 3px; margin-left: 18px; }
.views { display: flex; align-items: center; margin-left: auto; padding-right: 8px; }
.view { width: 38px; height: 21px; display: flex; align-items: center; justify-content: center; }
.view.on { background: #c6c6c6; }
.step { width: 14px; font-weight: 700; color: #444; }
.zoom { appearance: none; width: 104px; height: 16px; margin: 0; background: linear-gradient(#aaa, #aaa) center / 100% 1px no-repeat; }
.zoom::-webkit-slider-thumb { appearance: none; width: 5px; height: 11px; background: #666; }
.percent { margin-left: 5px; width: 32px; }
.watermark {
  position: absolute;
  right: 6px;
  top: -3px;
  font: 17px/20px "Liberation Sans", sans-serif;
  color: rgba(255, 255, 255, .6);
  text-shadow: 1px 1px 1px rgba(0, 0, 0, .15);
  pointer-events: none;
}
.edge { height: 4px; background: #050805; display: flex; }
.edge i { width: 36px; margin-left: 257px; background: #3a3c3a; }
```
